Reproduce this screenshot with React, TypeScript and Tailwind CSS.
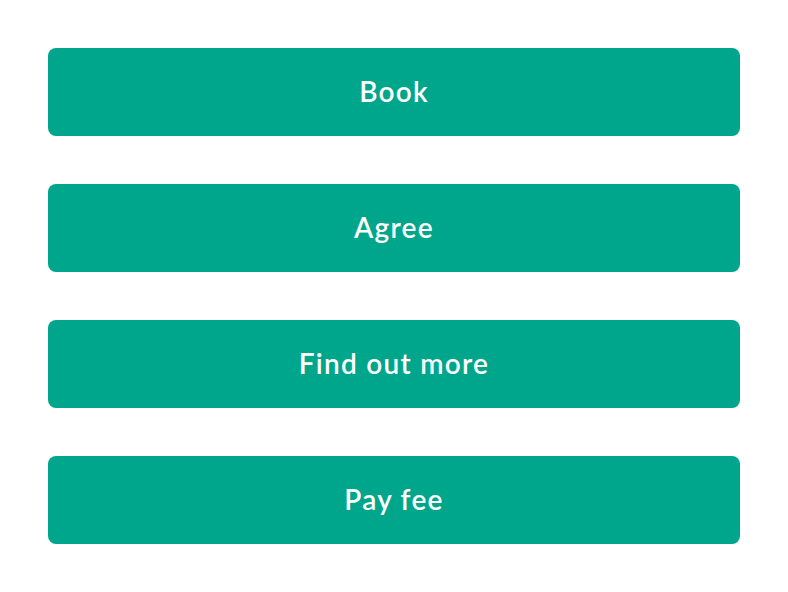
const labels = ['Book', 'Agree', 'Find out more', 'Pay fee'];

export default function App() {
  return (
    <div className="min-h-[592px] w-full bg-white px-12 pt-12">
      <div className="flex flex-col gap-12">
        {labels.map((label) => (
          <button
            key={label}
            type="button"
            className="flex h-[88px] w-full items-center justify-center rounded-lg bg-[#00a68b] pb-[2px] text-[28px] font-semibold tracking-[0.045em] text-white"
            style={{ fontFamily: 'Lato, "Open Sans", sans-serif' }}
          >
            {label}
          </button>
        ))}
      </div>
    </div>
  );
}
